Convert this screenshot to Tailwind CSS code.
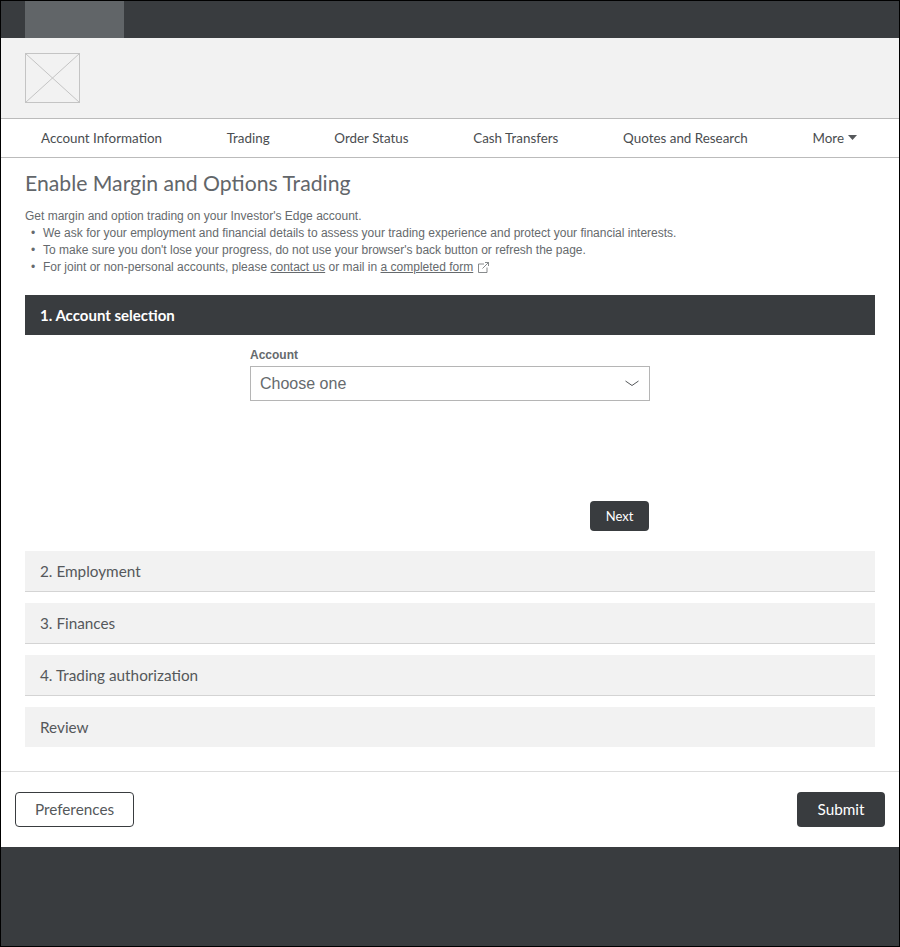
<!DOCTYPE html>
<html lang="en">
<head>
    <meta charset="UTF-8">
    <meta name="viewport" content="width=device-width, initial-scale=1.0">
    <title>Enable Margin and Options Trading</title>
    <script src="https://cdn.jsdelivr.net/npm/@tailwindcss/browser@4"></script>
</head>
<body class="bg-white font-['Lato',sans-serif]">
    <div class="w-[900px] h-[947px] border border-black flex flex-col overflow-hidden">
        <!-- top bar -->
        <div class="h-[37px] bg-[#393c3f] pl-6 shrink-0">
            <div class="w-[99px] h-full bg-[#616568]"></div>
        </div>
        <!-- logo band -->
        <div class="h-[80px] bg-[#f2f2f2] pl-6 pt-[15px] shrink-0">
            <svg width="55" height="50" viewBox="0 0 55 50" fill="none" stroke="#c4c4c4">
                <rect x="0.5" y="0.5" width="54" height="49"></rect>
                <path d="M0.5 0.5L54.5 49.5M54.5 0.5L0.5 49.5"></path>
            </svg>
        </div>
        <!-- nav -->
        <nav class="h-[40px] border-y border-[#bbbbbb] flex items-center justify-between pl-10 pr-[42px] text-[13.4px] text-[#4a4d50] shrink-0">
            <span>Account Information</span>
            <span>Trading</span>
            <span>Order Status</span>
            <span>Cash Transfers</span>
            <span>Quotes and Research</span>
            <span class="flex items-center gap-1">More
                <svg width="9" height="5" viewBox="0 0 9 5" fill="#55585b"><path d="M0 0H9L4.5 5Z"></path></svg>
            </span>
        </nav>
        <!-- main -->
        <main class="px-6 flex-1 flex flex-col">
            <h1 class="text-[21.2px] leading-[28px] mt-[11px] text-[#62666a]">Enable Margin and Options Trading</h1>
            <div class="mt-[11px] font-['Liberation_Sans',sans-serif] text-[12px] leading-[17px] text-[#666a6d]">
                <p>Get margin and option trading on your Investor's Edge account.</p>
                <ul>
                    <li class="flex"><span class="w-[18px] pl-[6px]">•</span>We ask for your employment and financial details to assess your trading experience and protect your financial interests.</li>
                    <li class="flex"><span class="w-[18px] pl-[6px]">•</span>To make sure you don't lose your progress, do not use your browser's back button or refresh the page.</li>
                    <li class="flex items-center"><span class="w-[18px] pl-[6px]">•</span>For joint or non-personal accounts, please&nbsp;<a class="underline">contact us</a>&nbsp;or mail in&nbsp;<a class="underline">a completed form</a>
                        <svg class="ml-[5px]" width="11" height="11" viewBox="0 0 11 11" fill="none" stroke="#6a6d70" stroke-width="0.8">
                            <path d="M6 2H0.5V10.5H9V5.5M4.5 6.5L10.5 0.5M7 0.5H10.5V4"></path>
                        </svg>
                    </li>
                </ul>
            </div>
            <!-- step 1 -->
            <div class="mt-[19px] h-[40px] bg-[#393c3f] text-white font-bold text-[15px] flex items-center pl-[15px] shrink-0">1. Account selection</div>
            <div class="h-[216px] shrink-0 flex flex-col items-center font-['Liberation_Sans',sans-serif]">
                <div class="w-[400px]">
                    <label class="block mt-[13px] text-[12px] leading-[14px] font-bold text-[#666a6d]">Account</label>
                    <div class="mt-[4px] h-[35px] border border-[#b5b5b5] flex items-center justify-between pl-[9px] pr-[10px] text-[16px] text-[#666a6d]">
                        <span>Choose one</span>
                        <svg width="14" height="7" viewBox="0 0 14 7" fill="none" stroke="#55585b" stroke-width="1"><path d="M0.5 1L7 5.5L13.5 1"></path></svg>
                    </div>
                    <div class="mt-[100px] flex justify-end pr-px">
                        <button class="w-[59px] h-[30px] pt-[2px] rounded-[4px] bg-[#393c3f] text-white text-[13px] font-['Lato',sans-serif]">Next</button>
                    </div>
                </div>
            </div>
            <!-- collapsed steps -->
            <div class="flex flex-col gap-[11px] text-[15.3px] text-[#55585b]">
                <div class="h-[41px] pt-px bg-[#f2f2f2] border-b border-[#d4d4d4] flex items-center pl-[15px]">2. Employment</div>
                <div class="h-[41px] pt-px bg-[#f2f2f2] border-b border-[#d4d4d4] flex items-center pl-[15px]">3. Finances</div>
                <div class="h-[41px] pt-px bg-[#f2f2f2] border-b border-[#d4d4d4] flex items-center pl-[15px]">4. Trading authorization</div>
                <div class="h-[40px] pt-px bg-[#f2f2f2] flex items-center pl-[15px]">Review</div>
            </div>
        </main>
        <!-- actions -->
        <div class="h-[76px] border-t border-[#dddddd] px-[14px] flex items-start justify-between pt-[20px] shrink-0 text-[15.3px]">
            <button class="w-[119px] h-[35px] border border-[#393c3f] rounded-[4px] text-[#55585b]">Preferences</button>
            <button class="w-[88px] h-[35px] rounded-[4px] bg-[#393c3f] text-white">Submit</button>
        </div>
        <!-- footer -->
        <div class="h-[99px] bg-[#393c3f] shrink-0"></div>
    </div>
</body>
</html>
